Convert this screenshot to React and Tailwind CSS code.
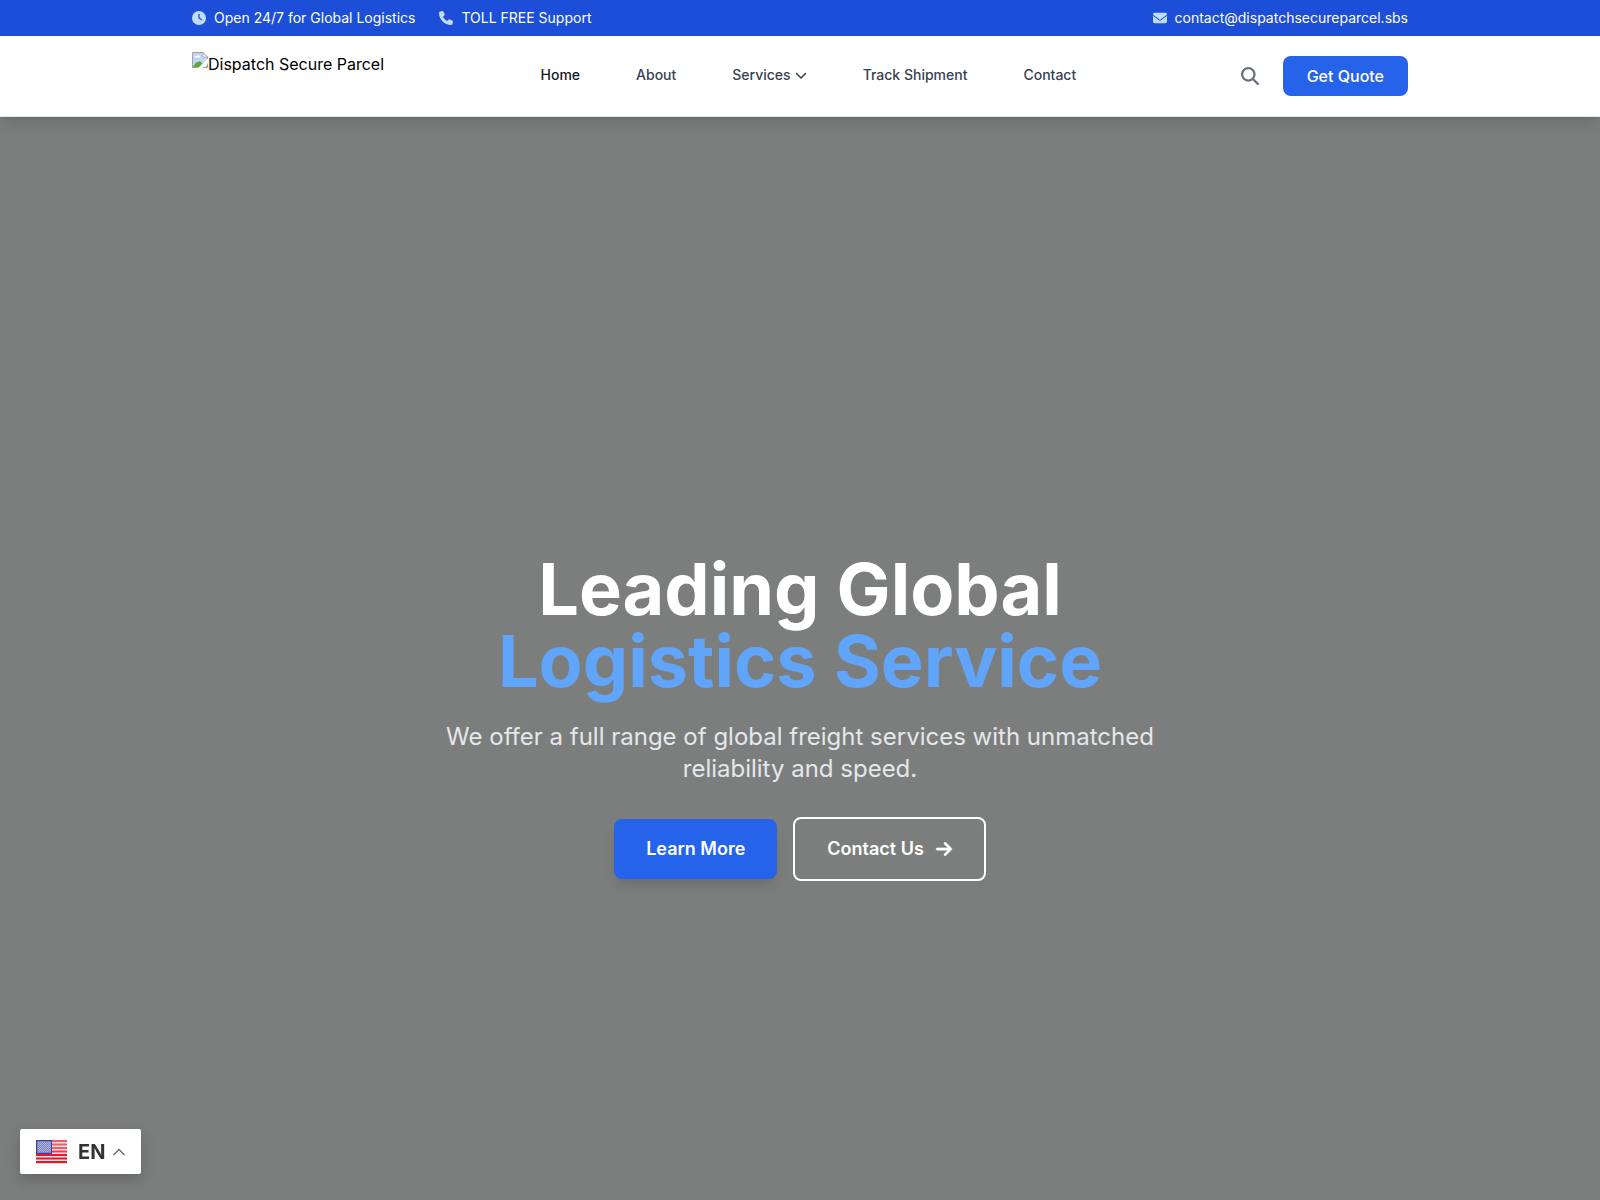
import { FaArrowRight, FaChevronDown, FaClock, FaEnvelope, FaMagnifyingGlass, FaPhone } from 'react-icons/fa6';

const navLinks = [
    { label: 'Home', active: true },
    { label: 'About' },
    { label: 'Services', dropdown: true },
    { label: 'Track Shipment' },
    { label: 'Contact' },
];

const TopBar = () => (
    <div className="bg-[#1d4ed8] text-white text-sm">
        <div className="max-w-7xl mx-auto px-8 py-2 flex items-center justify-between">
            <div className="flex items-center gap-6">
                <div className="flex items-center gap-2">
                    <FaClock className="text-[#bfdbfe]" />
                    <span>Open 24/7 for Global Logistics</span>
                </div>
                <div className="flex items-center gap-2">
                    <FaPhone className="text-[#bfdbfe]" />
                    <span>TOLL FREE Support</span>
                </div>
            </div>
            <a href="mailto:contact@dispatchsecureparcel.sbs" className="flex items-center gap-2">
                <FaEnvelope className="text-[#bfdbfe]" />
                <span>contact@dispatchsecureparcel.sbs</span>
            </a>
        </div>
    </div>
);

const ImageIcon = () => (
    <svg width="16" height="16" viewBox="0 0 16 16" aria-hidden="true">
        <path d="M0.5 0.5H11L15.5 5V9.5L8.5 15.5H0.5Z" fill="#c5d3f5" />
        <path d="M2.5 5.5a1.5 1.5 0 0 1 2-1.5a2 2 0 0 1 3.5 1.5Z" fill="#fff" />
        <path d="M1 15.5C2 12 5 9 8 9.5L11.5 12L8 15.5H1Z" fill="#56ab34" />
        <path d="M0.5 16V0.5H11L15.5 5V7" fill="none" stroke="#a3a3a3" />
        <path d="M11 0.5V5H15.5Z" fill="#fff" stroke="#a3a3a3" strokeWidth="0.8" />
        <path d="M16 6.5V9L8.5 16H6Z" fill="#fff" />
        <path d="M13 15.5L15.5 13V15.5Z" fill="#56ab34" />
        <path d="M0 15.5H6M11 15.5H15.5V11.5" fill="none" stroke="#a3a3a3" />
    </svg>
);

const Header = () => (
    <header className="relative z-10 bg-white border-b border-[#e5e7eb] shadow-lg">
        <div className="max-w-7xl mx-auto px-8 h-20 flex items-center justify-between">
            <a href="#home" className="flex items-start h-12 text-black">
                <ImageIcon />
                <span>Dispatch Secure Parcel</span>
            </a>
            <nav className="flex gap-8 text-sm font-medium">
                {navLinks.map((link) => (
                    <a
                        key={link.label}
                        href="#"
                        className={`flex items-center gap-1 px-3 pb-0.5 ${link.active ? 'text-[#111827]' : 'text-[#374151]'}`}
                    >
                        {link.label}
                        {link.dropdown && <FaChevronDown className="text-xs" />}
                    </a>
                ))}
            </nav>
            <div className="flex items-center gap-4">
                <button className="p-2 text-lg leading-none text-[#6b7280]" aria-label="Search">
                    <FaMagnifyingGlass />
                </button>
                <button className="px-6 py-2 rounded-lg bg-[#2563eb] text-white font-medium">
                    Get Quote
                </button>
            </div>
        </div>
    </header>
);

const Hero = () => (
    <section className="min-h-screen bg-[#7c7e7d] flex items-center justify-center text-center">
        <div className="max-w-3xl px-4">
            <h1 className="text-7xl leading-none font-bold text-white mb-6">
                Leading Global
                <span className="block text-[#60a5fa]">Logistics Service</span>
            </h1>
            <p className="text-2xl text-[#e5e7eb] mb-8">
                We offer a full range of global freight services with unmatched reliability and speed.
            </p>
            <div className="flex items-center justify-center gap-4 text-lg font-semibold text-white">
                <button className="px-8 py-4 rounded-lg bg-[#2563eb] shadow-lg">Learn More</button>
                <button className="px-8 py-4 rounded-lg border-2 border-white flex items-center gap-3">
                    Contact Us
                    <FaArrowRight className="-mx-px stroke-white stroke-[16px]" />
                </button>
            </div>
        </div>
    </section>
);

const Flag = () => (
    <svg width="32" height="24" viewBox="0 0 32 24" aria-hidden="true">
        <rect y="0.5" width="31" height="23.5" fill="#d9d9d9" />
        <rect width="31" height="23" fill="#fbe4e6" />
        <g fill="#f8596a">
            <rect width="31" height="2" />
            <rect y="3.5" width="31" height="2" />
            <rect y="7" width="31" height="2" />
            <rect y="10.5" width="31" height="2" fill="#f23a4d" />
        </g>
        <g fill="#e6162b">
            <rect y="14" width="31" height="2" />
            <rect y="17.5" width="31" height="2" />
            <rect y="21" width="31" height="2" />
        </g>
        <rect width="16" height="14" fill="#3c3f9e" />
        <rect x="1" y="1" width="14" height="12" fill="#8083c2" />
        <g stroke="#b0b2da" strokeDasharray="1 1">
            <path d="M2 2.5H15M2 4.5H15M2 6.5H15M2 8.5H15M2 10.5H15" />
            <path d="M3 3.5H15M3 5.5H15M3 7.5H15M3 9.5H15M3 11.5H15" />
        </g>
    </svg>
);

const LanguageSwitcher = () => (
    <button className="fixed z-20 left-5 bottom-[26px] h-[45px] px-4 flex items-center bg-white text-[#333] rounded-[2px] shadow-[0_5px_15px_rgba(0,0,0,0.2)]">
        <Flag />
        <span className="ml-2.5 mr-2 text-xl font-bold">EN</span>
        <svg width="12" height="8" viewBox="0 0 12 8" fill="none" stroke="#666" strokeWidth="1.3" aria-hidden="true">
            <path d="M0.5 7L6 1.5L11.5 7" />
        </svg>
    </button>
);

const App = () => {
    return (
        <div className="font-['Inter',sans-serif]">
            <TopBar />
            <Header />
            <Hero />
            <LanguageSwitcher />
        </div>
    );
};

export default App;
